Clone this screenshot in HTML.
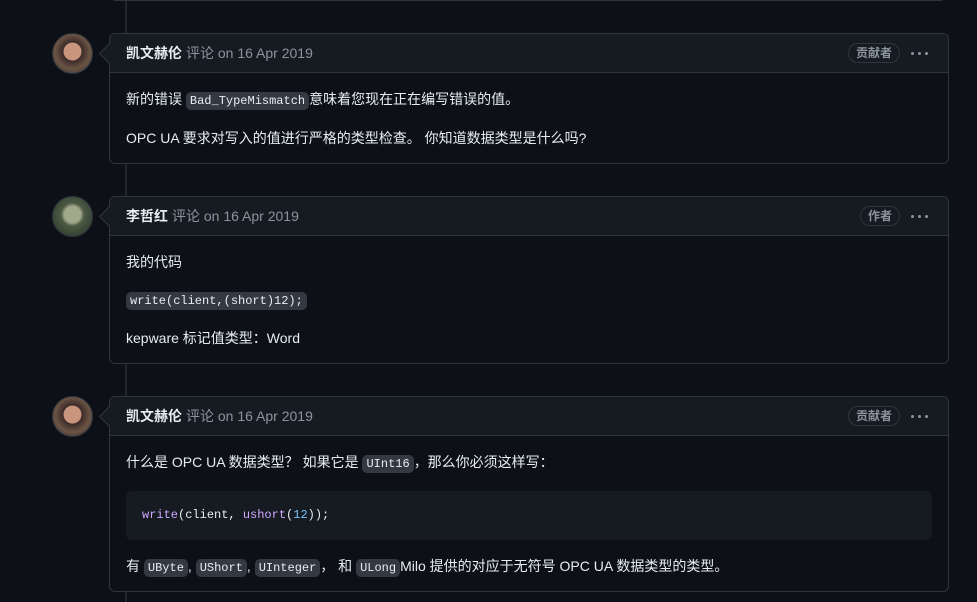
<!DOCTYPE html>
<html><head><meta charset="utf-8"><style>
*{box-sizing:border-box;margin:0;padding:0}
body{width:977px;height:602px;overflow:hidden;background:#0d1117;font-family:"Liberation Sans","Noto Sans CJK SC",sans-serif;color:#e6edf3;font-size:14px;position:relative}
.line{position:absolute;left:125px;top:0;bottom:0;width:2px;background:#21262d}
.topbox{position:absolute;left:110px;top:-20px;width:836px;height:21px;border:1px solid #30363d;border-radius:6px;background:#0d1117}
.av{position:absolute;left:52px;width:41px;height:41px;border-radius:50%;border:1px solid #30363d;overflow:hidden}
.c{position:absolute;left:109px;width:840px;border:1px solid #30363d;border-radius:6px;background:#0d1117}
.c:before{content:"";position:absolute;left:-8px;top:12px;width:14px;height:14px;background:#161b22;border-left:1px solid #30363d;border-bottom:1px solid #30363d;transform:rotate(45deg)}
.h{height:39px;background:#161b22;border-bottom:1px solid #30363d;border-radius:6px 6px 0 0;padding:0 16px;display:flex;align-items:center;color:#8b949e;position:relative}
.h b{color:#e6edf3;margin-right:4px}
.badge{position:absolute;right:48px;top:9px;height:20px;border:1px solid #30363d;border-radius:10px;padding:0 7px;font-size:12px;line-height:18px;color:#8b949e;font-weight:bold}
.dots{position:absolute;right:20px;top:18px;display:flex;gap:4px}
.dots i{width:3px;height:3px;background:#8b949e;border-radius:50%}
.b{padding:16px 16px 0 16px}
.b p{line-height:21px;margin-bottom:16px}
code{font-family:"Liberation Mono",monospace;font-size:12px;background:#343941;border-radius:5px;padding:2px 4px}
pre{background:#161b22;border-radius:6px;padding:16px;font-family:"Liberation Mono",monospace;font-size:12px;line-height:17px;margin-bottom:16px;height:49px}
</style></head><body>
<div class="line"></div>
<div class="topbox"></div>

<div class="av" style="top:33px;background:radial-gradient(circle at 50% 45%,#c9957c 0 30%,#3b2a2a 32%,#6b5443 60%,#2a2a3a 100%)"></div>
<div class="c" style="top:33px;height:131px">
 <div class="h"><b>凯文赫伦</b>评论 on 16 Apr 2019<span class="badge">贡献者</span><span class="dots"><i></i><i></i><i></i></span></div>
 <div class="b"><p>新的错误 <code>Bad_TypeMismatch</code>意味着您现在正在编写错误的值。</p><p>OPC UA 要求对写入的值进行严格的类型检查。 你知道数据类型是什么吗?</p></div>
</div>

<div class="av" style="top:196px;background:radial-gradient(circle at 50% 45%,#a2a88a 0 28%,#4c5a44 40%,#253025 100%)"></div>
<div class="c" style="top:196px;height:168px">
 <div class="h"><b>李哲红</b>评论 on 16 Apr 2019<span class="badge">作者</span><span class="dots"><i></i><i></i><i></i></span></div>
 <div class="b"><p>我的代码</p><p><code>write(client,(short)12);</code></p><p>kepware 标记值类型：Word</p></div>
</div>

<div class="av" style="top:396px;background:radial-gradient(circle at 50% 45%,#c9957c 0 30%,#3b2a2a 32%,#6b5443 60%,#2a2a3a 100%)"></div>
<div class="c" style="top:396px;height:196px">
 <div class="h"><b>凯文赫伦</b>评论 on 16 Apr 2019<span class="badge">贡献者</span><span class="dots"><i></i><i></i><i></i></span></div>
 <div class="b"><p>什么是 OPC UA 数据类型？ 如果它是 <code>UInt16</code>，那么你必须这样写：</p>
 <pre><span style="color:#d2a8ff">write</span>(client, <span style="color:#d2a8ff">ushort</span>(<span style="color:#79c0ff">12</span>));</pre>
 <p>有 <code>UByte</code>, <code>UShort</code>, <code>UInteger</code>， 和 <code>ULong</code>Milo 提供的对应于无符号 OPC UA 数据类型的类型。</p></div>
</div>
</body></html>
